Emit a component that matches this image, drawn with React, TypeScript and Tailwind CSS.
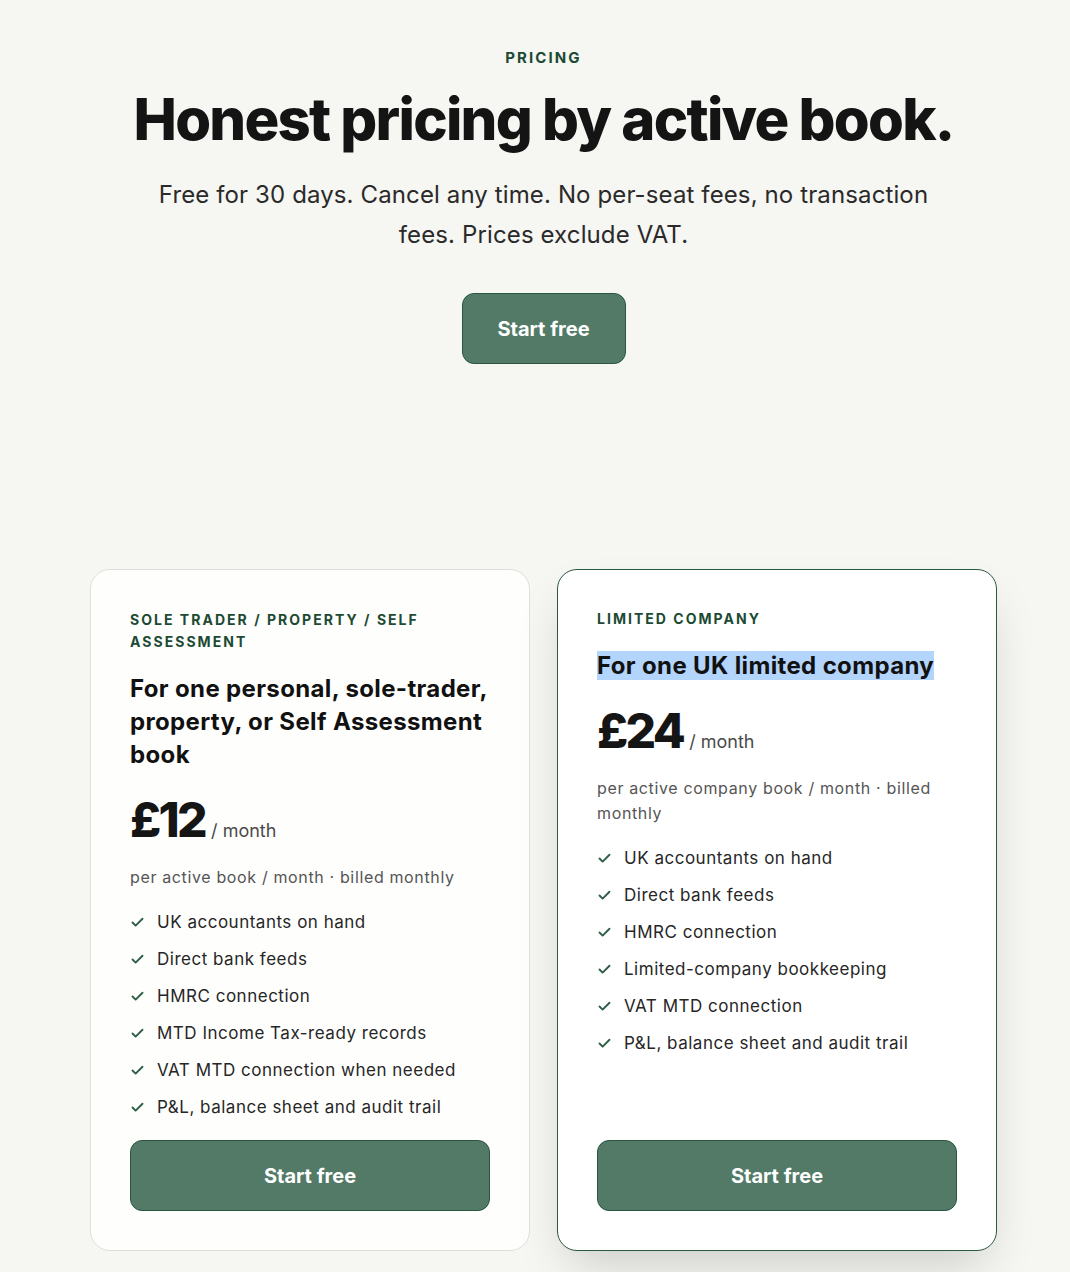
import { Check } from "lucide-react";

interface Plan {
  label: string;
  title: string;
  price: string;
  note: string;
  features: string[];
  featured?: boolean;
}

const plans: Plan[] = [
  {
    label: "Sole trader / property / Self Assessment",
    title: "For one personal, sole-trader, property, or Self Assessment book",
    price: "£12",
    note: "per active book / month · billed monthly",
    features: [
      "UK accountants on hand",
      "Direct bank feeds",
      "HMRC connection",
      "MTD Income Tax-ready records",
      "VAT MTD connection when needed",
      "P&L, balance sheet and audit trail",
    ],
  },
  {
    label: "Limited company",
    title: "For one UK limited company",
    price: "£24",
    note: "per active company book / month · billed monthly",
    features: [
      "UK accountants on hand",
      "Direct bank feeds",
      "HMRC connection",
      "Limited-company bookkeeping",
      "VAT MTD connection",
      "P&L, balance sheet and audit trail",
    ],
    featured: true,
  },
];

function PlanCard({ plan }: { plan: Plan }) {
  return (
    <div
      className={
        plan.featured
          ? "flex flex-col rounded-[20px] border-[1.5px] border-[#2c5742] bg-white px-[39px] pt-[38px] pb-[39px] shadow-[0_24px_50px_-12px_rgba(0,0,0,0.18)]"
          : "flex flex-col rounded-[20px] border border-[#e0e0da] bg-[#fefefd] px-[39px] pt-[39px] pb-[39px]"
      }
    >
      <p className="text-[14px] leading-[22px] font-bold tracking-[0.145em] text-[#1c4a33] uppercase">
        {plan.label}
      </p>
      <h3 className="mt-[19px] text-[24px] leading-[33px] font-bold tracking-[0.015em] text-[#111]">
        {plan.featured ? <span className="bg-[#b3d4fb]">{plan.title}</span> : plan.title}
      </h3>
      <div className="mt-[25px] flex items-baseline gap-[6px]">
        <span className="text-[48px] leading-[48px] font-extrabold tracking-[-0.055em] text-[#151515]">
          {plan.price}
        </span>
        <span className="text-[18px] text-[#4a4a4a]">/ month</span>
      </div>
      <p className="mt-[21px] text-[16px] leading-[25px] tracking-[0.04em] text-[#555]">
        {plan.note}
      </p>
      <ul className="mt-[19px] flex flex-col gap-[11px]">
        {plan.features.map((f) => (
          <li
            key={f}
            className="flex items-center gap-[12px] text-[17px] leading-[26px] tracking-[0.03em] text-[#262626]"
          >
            <Check className="h-[15px] w-[15px] shrink-0 text-[#2e5d45]" strokeWidth={3} />
            {f}
          </li>
        ))}
      </ul>
      <div className="mt-auto pt-[20px]">
        <button className="h-[71px] w-full rounded-[12px] border border-[#2a5640] bg-[#527a67] text-[20px] font-bold text-white">
          Start free
        </button>
      </div>
    </div>
  );
}

export default function App() {
  return (
    <div className="min-h-[1272px] bg-[#f6f6f2] pl-[17px] font-['Inter',sans-serif]">
      <section className="flex flex-col items-center pt-[47px]">
        <p className="text-[15px] leading-[22px] font-bold tracking-[0.14em] text-[#1c4a33]">PRICING</p>
        <h1 className="mt-[14px] text-[58px] leading-[72px] font-extrabold tracking-[-0.03em] text-[#141414]">
          Honest pricing by active book.
        </h1>
        <p className="mt-[20px] max-w-[790px] text-center text-[24px] leading-[40px] tracking-[0.005em] text-[#2a2a2a]">
          Free for 30 days. Cancel any time. No per-seat fees, no transaction fees. Prices exclude VAT.
        </p>
        <button className="mt-[38px] h-[71px] w-[164px] rounded-[12px] border border-[#2a5640] bg-[#527a67] text-[20px] font-bold text-white">
          Start free
        </button>
      </section>
      <section className="mx-auto mt-[205px] grid w-[907px] grid-cols-2 gap-[27px]">
        {plans.map((p) => (
          <PlanCard key={p.price} plan={p} />
        ))}
      </section>
    </div>
  );
}
